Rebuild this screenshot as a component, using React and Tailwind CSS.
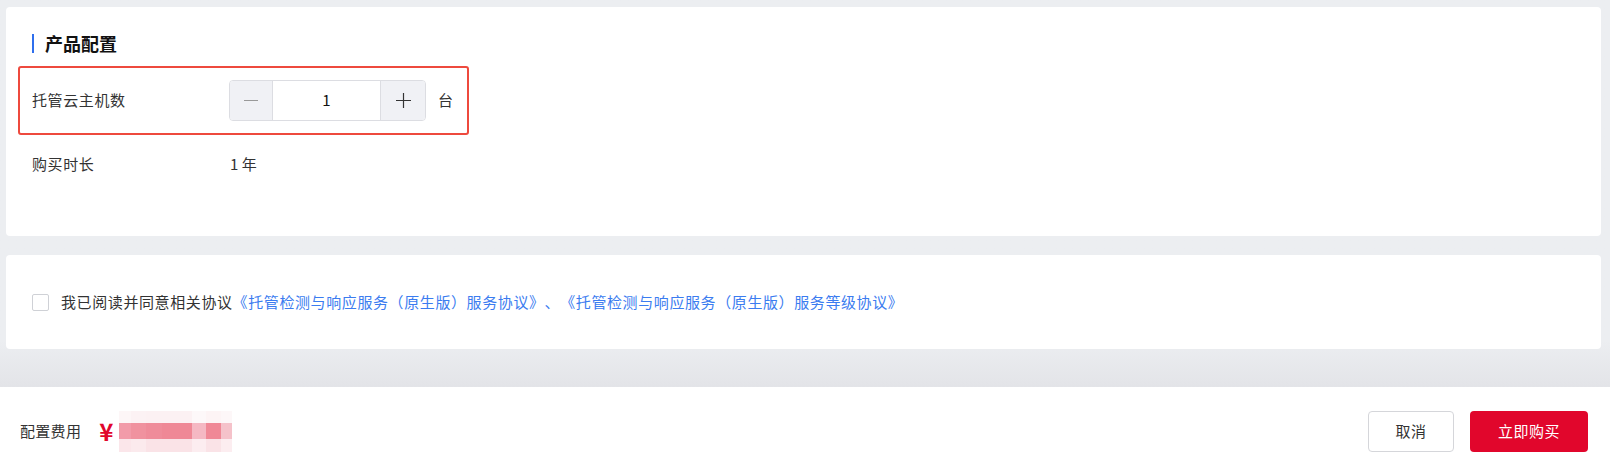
import React from "react";

const FONT = { fontFamily: '"Noto Sans CJK SC", "Noto Sans", sans-serif' };

function Blur() {
  const cols = [11.7, 15, 15.6, 30, 14.7, 14.7, 11];
  const rows = [
    { h: 12, c: ["#fdf6f7", "#fcf2f4", "#fcf1f3", "#fcf1f3", "#fdf8f9", "#fdf4f5", "#fdf7f8"] },
    { h: 16, c: ["#f29ba9", "#f0929f", "#ef8c9a", "#ef8896", "#f5b8c3", "#f08896", "#f5c2ca"] },
    { h: 13, c: ["#fbe6ea", "#fbeaed", "#fae3e7", "#fae3e7", "#fcedf0", "#fae3e7", "#fcedf0"] },
  ];
  return (
    <div className="flex flex-col">
      {rows.map((r, i) => (
        <div key={i} className="flex" style={{ height: r.h }}>
          {cols.map((w, j) => (
            <div key={j} style={{ width: w, background: r.c[j] }} />
          ))}
        </div>
      ))}
    </div>
  );
}

export default function App() {
  return (
    <div className="w-[1610px] h-[475px] flex flex-col bg-[#eceef1] overflow-hidden [text-spacing-trim:space-all]" style={FONT}>
      <div className="flex-1 flex flex-col pt-[7px] pl-[6px] pr-[9px] bg-gradient-to-b from-[#eceef1] from-[88%] to-[#e3e4e8]">
        {/* Card 1 */}
        <div className="h-[229px] bg-white rounded-[4px] px-[12px] pt-[26px]">
          <div className="flex items-center h-[20px] pl-[14px]">
            <div className="w-[2px] h-[19px] bg-[#2f6fed]" />
            <div className="ml-[11px] text-[18px] font-bold text-[#111] leading-[20px]">产品配置</div>
          </div>
          <div className="mt-[13px] w-[451px] h-[69px] border-2 border-[#ee4a3e] rounded-[3px] flex items-center pl-[12px]">
            <div className="w-[197px] text-[15px] tracking-[0.6px] text-[#333]">托管云主机数</div>
            <div className="flex h-[41px] w-[197px] border border-[#dcdde2] rounded-[4px] overflow-hidden">
              <div className="w-[43px] bg-[#f0f1f5] flex items-center justify-center border-r border-[#dcdde2]">
                <div className="w-[14px] h-px bg-[#999]" />
              </div>
              <div className="flex-1 flex items-center justify-center text-[15px] text-[#111]">1</div>
              <div className="w-[45px] bg-[#f0f1f5] flex items-center justify-center border-l border-[#dcdde2]">
                <svg width="15" height="15" viewBox="0 0 15 15">
                  <path d="M7.5 0V15M0 7.5H15" stroke="#333" strokeWidth="1.2" />
                </svg>
              </div>
            </div>
            <div className="ml-[12px] text-[15px] text-[#333]">台</div>
          </div>
          <div className="mt-[18px] flex items-center pl-[14px] h-[22px]">
            <div className="w-[198px] text-[15px] tracking-[0.6px] text-[#333]">购买时长</div>
            <div className="text-[15px] text-[#333]">1 年</div>
          </div>
        </div>

        {/* Card 2 */}
        <div className="mt-[19px] h-[94px] bg-white rounded-[4px] flex items-center pl-[26px]">
          <div className="w-[17px] h-[17px] border border-[#cfd1d6] rounded-[2px] bg-white" />
          <div className="ml-[12px] text-[15px] tracking-[0.6px] text-[#333] whitespace-nowrap">
            我已阅读并同意相关协议
            <span className="text-[#3b7cf0]">《托管检测与响应服务（原生版）服务协议》、《托管检测与响应服务（原生版）服务等级协议》</span>
          </div>
        </div>
      </div>

      {/* Footer */}
      <div className="h-[88px] bg-white flex items-center pl-[20px] pr-[22px] shrink-0">
        <div className="text-[15px] tracking-[0.3px] text-[#333]">配置费用</div>
        <div className="ml-[18px] text-[24px] font-bold text-[#e1062c] leading-none">¥</div>
        <div className="ml-[6px]">
          <Blur />
        </div>
        <div className="flex-1" />
        <button className="w-[86px] h-[41px] border border-[#d5d6da] rounded-[4px] bg-white text-[15px] tracking-[0.5px] text-[#333]">取消</button>
        <button className="ml-[16px] w-[118px] h-[41px] rounded-[4px] bg-[#e1062c] text-[15px] tracking-[0.5px] text-white">立即购买</button>
      </div>
    </div>
  );
}
